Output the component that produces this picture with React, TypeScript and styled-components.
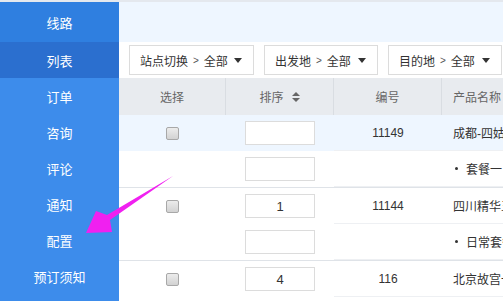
import React from 'react';
import styled, {createGlobalStyle} from 'styled-components';

const GlobalStyle = createGlobalStyle`
  html, body {
    margin: 0;
    padding: 0;
    background: #fff;
    font-family: "Liberation Sans", "Noto Sans CJK SC", sans-serif;
  }
`;

const Page = styled.div`
  position: relative;
  display: flex;
  height: 301px;
  overflow: hidden;
  border-top: 2px solid #e4e8ee;
  box-sizing: border-box;
`;

const Sidebar = styled.nav`
  width: 119px;
  flex-shrink: 0;
  display: flex;
  flex-direction: column;
  background: #3d8ceb;
`;

const NavItem = styled.div<{ $kind?: 'top' | 'active' }>`
  flex-shrink: 0;
  height: ${p => (p.$kind === 'top' ? '40px' : '36px')};
  display: flex;
  align-items: center;
  justify-content: center;
  color: #fff;
  font-size: 13px;
  background: ${p => (p.$kind === 'top' ? '#2f7fe0' : p.$kind === 'active' ? '#2b6fcf' : 'transparent')};
`;

const Main = styled.main`
  flex: 1;
  display: flex;
  flex-direction: column;
  min-width: 0;
  & > * {
    flex-shrink: 0;
  }
`;

const TopBand = styled.div`
  height: 40px;
  background: #eef6ff;
`;

const FilterBar = styled.div`
  height: 36px;
  display: flex;
  align-items: center;
  gap: 10px;
  padding: 0 10px;
  background: #fff;
  white-space: nowrap;
`;

const Dropdown = styled.div<{ $w: number }>`
  flex-shrink: 0;
  width: ${p => p.$w}px;
  height: 30px;
  box-sizing: border-box;
  border: 1px solid #dcdcdc;
  display: flex;
  align-items: center;
  padding: 0 11px 0 10px;
  font-size: 12px;
  color: #333;
`;

const Sep = styled.span`
  font-size: 10px;
  margin: 0 5px;
  color: #555;
`;

const Caret = styled.span`
  margin-left: auto;
  width: 0;
  height: 0;
  border-left: 4px solid transparent;
  border-right: 4px solid transparent;
  border-top: 5px solid #333;
`;

const Grid = styled.div`
  display: grid;
  grid-template-columns: 107px 108px 108px 1fr;
`;

const HeadRow = styled(Grid)`
  height: 37px;
  background: #e8ebef;
`;

const HeadCell = styled.div<{ $last?: boolean }>`
  display: flex;
  align-items: center;
  gap: 8px;
  font-size: 12px;
  color: #666;
  white-space: nowrap;
  overflow: hidden;
  border-right: ${p => (p.$last ? 'none' : '1px solid #d9dde2')};
  justify-content: ${p => (p.$last ? 'flex-start' : 'center')};
  padding-left: ${p => (p.$last ? '11px' : '0')};
`;

const SortIcon = styled.span`
  display: inline-flex;
  flex-direction: column;
  gap: 2px;
  &::before, &::after {
    content: '';
    width: 0;
    height: 0;
    border-left: 4px solid transparent;
    border-right: 4px solid transparent;
  }
  &::before { border-bottom: 4px solid #666; }
  &::after { border-top: 4px solid #666; }
`;

const Group = styled.div`
  border-bottom: 1px solid #dfe3e8;
`;

const SubRow = styled(Grid)<{ $hl?: boolean }>`
  height: 36px;
  background: ${p => (p.$hl ? '#eef6ff' : '#fff')};
`;

const Cell = styled.div<{ $lined?: boolean; $left?: boolean }>`
  display: flex;
  align-items: center;
  justify-content: ${p => (p.$left ? 'flex-start' : 'center')};
  padding-left: ${p => (p.$left ? '11px' : '0')};
  font-size: 12px;
  color: #333;
  white-space: nowrap;
  overflow: hidden;
  box-sizing: border-box;
  border-bottom: ${p => (p.$lined ? '1px solid #eef0f3' : 'none')};
`;

const Check = styled.input.attrs({type: 'checkbox'})`
  appearance: none;
  margin: 0;
  width: 13px;
  height: 13px;
  border: 1px solid #a8a8a8;
  border-radius: 2px;
  background: linear-gradient(#ececec, #d2d2d2);
  box-sizing: border-box;
`;

const SortInput = styled.input`
  width: 70px;
  height: 24px;
  box-sizing: border-box;
  border: 1px solid #dcdcdc;
  text-align: center;
  font-size: 13px;
  color: #333;
  font-family: inherit;
  outline: none;
`;

const Bullet = styled.span`
  flex-shrink: 0;
  width: 3px;
  height: 3px;
  background: #333;
  border-radius: 50%;
  margin: 0 8px 0 2px;
`;

const Arrow = styled.svg`
  position: absolute;
  left: 0;
  top: -2px;
  pointer-events: none;
`;

const navItems = ['订单', '咨询', '评论', '通知', '配置', '预订须知'];

const groups = [
    {sort: '', id: '11149', name: '成都-四姑娘山', pkg: '套餐一', hl: true},
    {sort: '1', id: '11144', name: '四川精华五日游', pkg: '日常套餐'},
    {sort: '4', id: '116', name: '北京故宫一日游', pkg: '套餐'},
];

export default function App() {
    return (
        <>
            <GlobalStyle/>
            <Page>
                <Sidebar>
                    <NavItem $kind="top">线路</NavItem>
                    <NavItem $kind="active">列表</NavItem>
                    {navItems.map(n => <NavItem key={n}>{n}</NavItem>)}
                </Sidebar>
                <Main>
                    <TopBand/>
                    <FilterBar>
                        <Dropdown $w={125}>站点切换<Sep>&gt;</Sep>全部<Caret/></Dropdown>
                        <Dropdown $w={114}>出发地<Sep>&gt;</Sep>全部<Caret/></Dropdown>
                        <Dropdown $w={114}>目的地<Sep>&gt;</Sep>全部<Caret/></Dropdown>
                    </FilterBar>
                    <HeadRow>
                        <HeadCell>选择</HeadCell>
                        <HeadCell>排序<SortIcon/></HeadCell>
                        <HeadCell>编号</HeadCell>
                        <HeadCell $last>产品名称</HeadCell>
                    </HeadRow>
                    {groups.map(g => (
                        <Group key={g.id}>
                            <SubRow $hl={g.hl}>
                                <Cell><Check/></Cell>
                                <Cell><SortInput defaultValue={g.sort}/></Cell>
                                <Cell $lined>{g.id}</Cell>
                                <Cell $lined $left>{g.name}</Cell>
                            </SubRow>
                            <SubRow>
                                <Cell/>
                                <Cell><SortInput defaultValue=""/></Cell>
                                <Cell $lined/>
                                <Cell $lined $left><Bullet/>{g.pkg}</Cell>
                            </SubRow>
                        </Group>
                    ))}
                </Main>
                <Arrow width="503" height="301" viewBox="0 0 503 301">
                    <polygon
                        points="173,176 107,215 96,211 86,233 112,232 110,220"
                        fill="#f020f0"
                    />
                </Arrow>
            </Page>
        </>
    );
}
